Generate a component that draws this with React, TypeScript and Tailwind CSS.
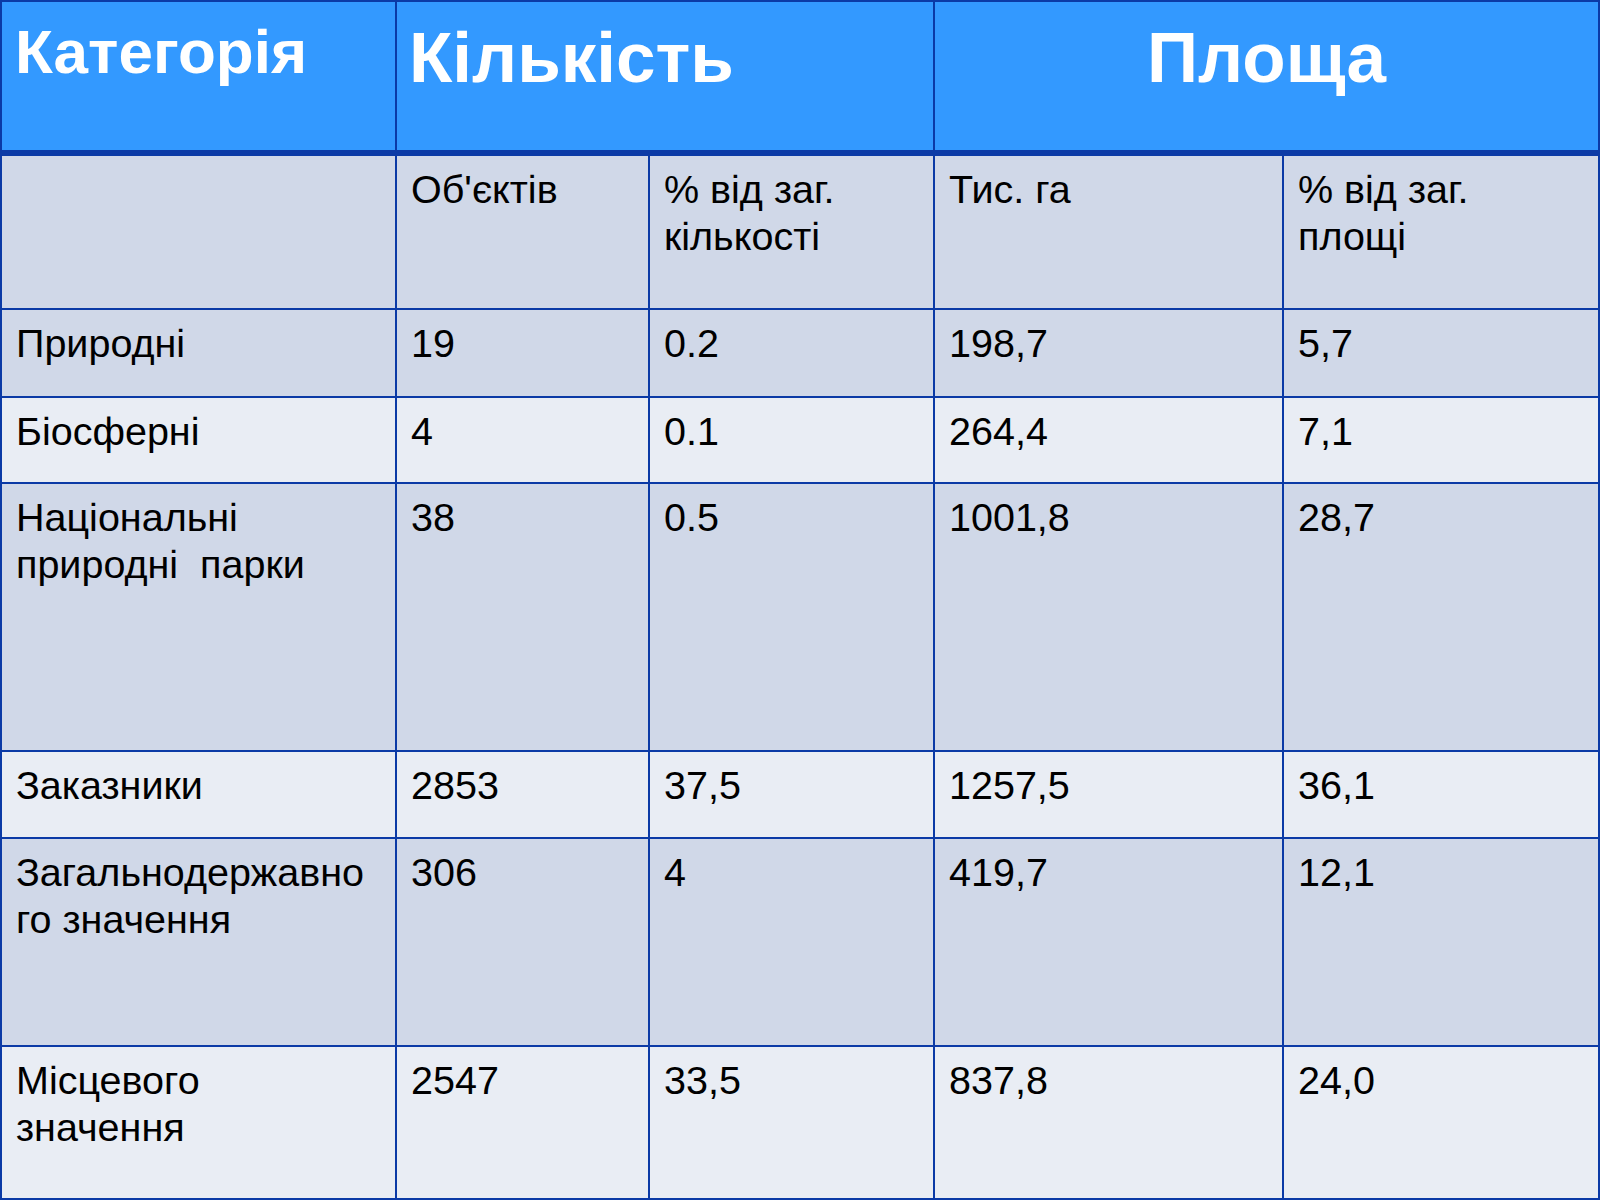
import React from "react";

const dark = "bg-[#d0d8e8]";
const light = "bg-[#e9edf4]";

type Row = { cells: string[][]; h: string; bg: string };

const rows: Row[] = [
  { cells: [[""], ["Об'єктів"], ["% від заг.", "кількості"], ["Тис. га"], ["% від заг.", "площі"]], h: "h-[152px]", bg: dark },
  { cells: [["Природні"], ["19"], ["0.2"], ["198,7"], ["5,7"]], h: "h-[86px]", bg: dark },
  { cells: [["Біосферні"], ["4"], ["0.1"], ["264,4"], ["7,1"]], h: "h-[84px]", bg: light },
  { cells: [["Національні", "природні  парки"], ["38"], ["0.5"], ["1001,8"], ["28,7"]], h: "h-[266px]", bg: dark },
  { cells: [["Заказники"], ["2853"], ["37,5"], ["1257,5"], ["36,1"]], h: "h-[85px]", bg: light },
  { cells: [["Загальнодержавно", "го значення"], ["306"], ["4"], ["419,7"], ["12,1"]], h: "h-[206px]", bg: dark },
  { cells: [["Місцевого", "значення"], ["2547"], ["33,5"], ["837,8"], ["24,0"]], h: "h-[151px]", bg: light },
];

export default function App() {
  return (
    <div
      className="w-[1600px] h-[1200px] bg-[#0b3aa6] p-[2px] overflow-hidden"
      style={{ fontFamily: '"Liberation Sans", Arial, sans-serif' }}
    >
      <div className="grid grid-cols-[393px_251px_283px_347px_314px] gap-[2px]">
        <div className="h-[152px] bg-[#3399ff] border-b-4 border-[#0b3aa6] pl-[13px] pt-[19px] text-white font-bold text-[62px] leading-[62px]">
          Категорія
        </div>
        <div className="col-span-2 h-[152px] bg-[#3399ff] border-b-4 border-[#0b3aa6] pl-[12px] pt-[20px] text-white font-bold text-[71px] leading-[71px]">
          Кількість
        </div>
        <div className="col-span-2 h-[152px] bg-[#3399ff] border-b-4 border-[#0b3aa6] pt-[20px] text-center text-white font-bold text-[71px] leading-[71px]">
          Площа
        </div>
        {rows.map((r, ri) =>
          r.cells.map((lines, ci) => (
            <div
              key={`${ri}-${ci}`}
              className={`${r.h} ${r.bg} px-[14px] pt-[10px] text-black text-[39.5px] leading-[47px] whitespace-pre`}
            >
              {lines.map((l, li) => (
                <div key={li}>{l}</div>
              ))}
            </div>
          ))
        )}
      </div>
    </div>
  );
}
